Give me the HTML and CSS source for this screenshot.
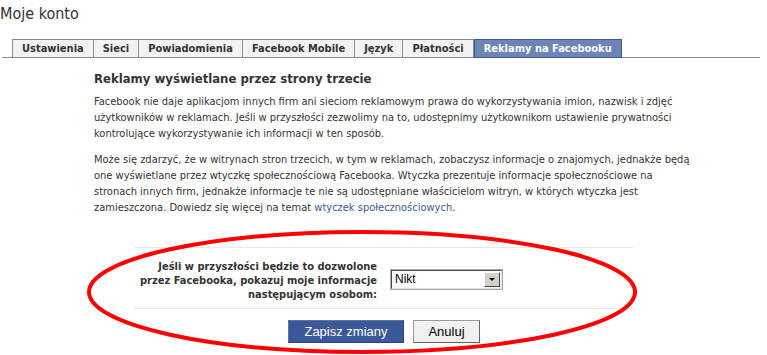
FILE: index.html
```html
<!DOCTYPE html>
<html lang="pl">
<head>
    <meta charset="UTF-8">
    <title>Moje konto</title>
    <link rel="stylesheet" href="styles.css">
</head>
<body>
    <div class="page">
        <h1 class="page-title">Moje konto</h1>

        <ul class="tabs">
            <li class="tab">Ustawienia</li>
            <li class="tab">Sieci</li>
            <li class="tab">Powiadomienia</li>
            <li class="tab">Facebook Mobile</li>
            <li class="tab">Język</li>
            <li class="tab">Płatności</li>
            <li class="tab active">Reklamy na Facebooku</li>
        </ul>

        <div class="content">
            <h2 class="section-title">Reklamy wyświetlane przez strony trzecie</h2>
            <p class="info">
                Facebook nie daje aplikacjom innych firm ani sieciom reklamowym prawa do wykorzystywania imion, nazwisk i zdjęć<br>
                użytkowników w reklamach. Jeśli w przyszłości zezwolimy na to, udostępnimy użytkownikom ustawienie prywatności<br>
                kontrolujące wykorzystywanie ich informacji w ten sposób.
            </p>
            <p class="info">
                Może się zdarzyć, że w witrynach stron trzecich, w tym w reklamach, zobaczysz informacje o znajomych, jednakże będą<br>
                one wyświetlane przez wtyczkę społecznościową Facebooka. Wtyczka prezentuje informacje społecznościowe na<br>
                stronach innych firm, jednakże informacje te nie są udostępniane właścicielom witryn, w których wtyczka jest<br>
                zamieszczona. Dowiedz się więcej na temat <a href="#">wtyczek społecznościowych</a>.
            </p>
        </div>

        <div class="form-section">
            <div class="form-row">
                <label class="form-label" for="ads-audience">Jeśli w przyszłości będzie to dozwolone<br>przez Facebooka, pokazuj moje informacje<br>następującym osobom:</label>
                <div class="select-wrap">
                    <select id="ads-audience" class="select">
                        <option>Nikt</option>
                        <option>Tylko znajomi</option>
                    </select>
                    <span class="select-arrow"></span>
                </div>
            </div>
        </div>

        <div class="buttons">
            <button class="btn btn-primary">Zapisz zmiany</button>
            <button class="btn">Anuluj</button>
        </div>

        <!-- red marker drawn over the form -->
        <svg class="marker" width="767" height="355" viewBox="0 0 767 355">
            <ellipse cx="362" cy="292" rx="273" ry="60" fill="none" stroke="#ff0000" stroke-width="4"/>
        </svg>
    </div>
</body>
</html>
```

FILE: styles.css
```css
* {
    margin: 0;
    padding: 0;
    box-sizing: border-box;
}

body {
    background: #fff;
    font-family: 'DejaVu Sans Condensed', 'DejaVu Sans', sans-serif;
    font-size: 11px;
    color: #333;
}

.page {
    position: relative;
    width: 767px;
    height: 355px;
    overflow: hidden;
}

.page-title {
    font-size: 16px;
    font-weight: normal;
    color: #333;
    padding-top: 4px;
    height: 39px;
}

/* Tabs */
.tabs {
    list-style: none;
    display: flex;
    margin: 0 7px 0 2px;
    padding-left: 10px;
    border-bottom: 1px solid #898989;
}

.tab {
    height: 19px;
    margin-bottom: -1px;
    padding: 0 9px;
    line-height: 17px;
    font-weight: bold;
    background: #f2f2f2;
    border: 1px solid #898989;
    border-left: none;
    color: #333;
}

.tab:first-child {
    border-left: 1px solid #898989;
}

.tab.active {
    background: #6d84b4;
    border: 1px solid #3b5998;
    color: #fff;
}

/* Content */
.content {
    padding-left: 94px;
}

.section-title {
    font-size: 13px;
    font-weight: bold;
    color: #333;
    margin-top: 13px;
    margin-bottom: 8px;
}

.info {
    line-height: 16px;
    margin-bottom: 10px;
    white-space: nowrap;
}

.info a {
    color: #3b5998;
    text-decoration: none;
}

/* Form */
.form-section {
    margin: 31px 0 0 134px;
    width: 499px;
    border-top: 1px solid #e9e9e9;
    border-bottom: 1px solid #e9e9e9;
    padding: 12px 0 6px;
}

.form-row {
    display: flex;
    align-items: center;
    gap: 13px;
}

.form-label {
    width: 243px;
    text-align: right;
    font-weight: bold;
    line-height: 14px;
    white-space: nowrap;
}

.select-wrap {
    position: relative;
    width: 113px;
    height: 21px;
    margin-bottom: 4px;
    border: 1px solid #a5acb2;
}

.select {
    appearance: none;
    -webkit-appearance: none;
    width: 100%;
    height: 100%;
    border: 1px solid #4b4b4b;
    border-right-color: #e0e0e0;
    border-bottom-color: #e0e0e0;
    background: #fff;
    font-family: 'Liberation Sans', sans-serif;
    font-size: 12px;
    color: #000;
    padding-left: 3px;
    outline: none;
}

.select-arrow {
    position: absolute;
    right: 2px;
    top: 2px;
    width: 16px;
    height: 15px;
    background: #d4d0c8;
    border: 1px solid;
    border-color: #fff #404040 #404040 #fff;
}

.select-arrow::after {
    content: "";
    position: absolute;
    left: 4px;
    top: 5px;
    border-left: 3px solid transparent;
    border-right: 3px solid transparent;
    border-top: 3px solid #000;
}

/* Buttons */
.buttons {
    display: flex;
    gap: 9px;
    padding: 11px 0 0 288px;
}

.btn {
    height: 23px;
    padding: 0 9px;
    font-family: 'Liberation Sans', sans-serif;
    font-size: 13px;
    background: #f0f0f0;
    color: #000;
    border: 1px solid #999;
    border-right-color: #666;
    border-bottom-color: #666;
    cursor: pointer;
    width: 67px;
}

.btn-primary {
    width: 116px;
    background: #3b5998;
    color: #fff;
    border: 1px solid #29447e;
    border-top-color: #5973a9;
    border-left-color: #5973a9;
}

.marker {
    position: absolute;
    top: 0;
    left: 0;
    pointer-events: none;
}
```
